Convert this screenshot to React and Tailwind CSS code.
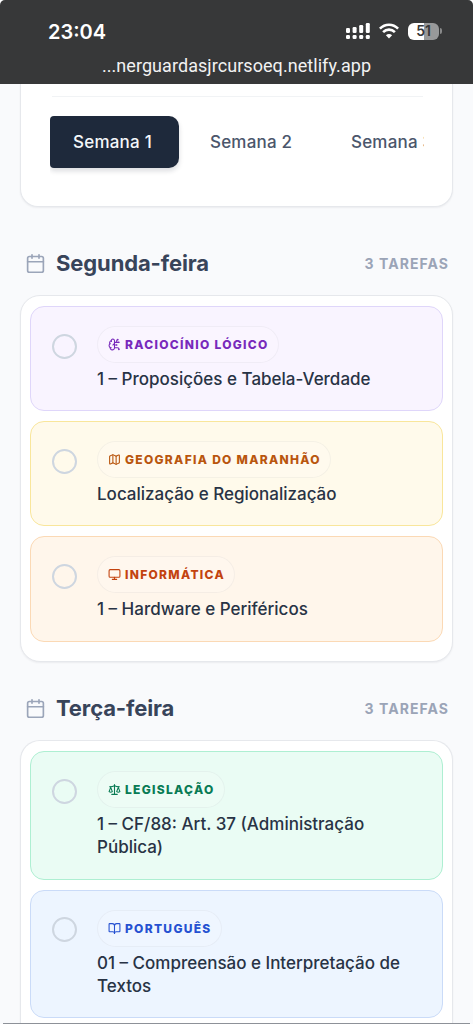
import React from 'react';
import { Calendar, BrainCircuit, Map as MapIcon, Monitor, Scale, BookOpen } from 'lucide-react';

function StatusBar() {
  return (
    <header className="h-[84px] shrink-0 bg-[#373839] rounded-t-[5px] text-white flex flex-col">
      <div className="flex items-center justify-between h-[26px] mt-[18px] pl-[48px] pr-[31px]">
        <span className="text-[20px] leading-[26px] pt-px font-semibold">23:04</span>
        <div className="flex items-center">
          <svg width="24" height="18" viewBox="0 0 24 18" fill="white">
            <rect x="0" y="6" width="4" height="5" rx="1.2" />
            <rect x="6.6" y="5" width="4" height="6" rx="1.2" />
            <rect x="13.2" y="3" width="4" height="8" rx="1.2" />
            <rect x="19.8" y="1" width="4" height="10" rx="1.2" />
            <rect x="0" y="13" width="4" height="4" rx="1.2" />
            <rect x="6.6" y="13" width="4" height="4" rx="1.2" />
            <rect x="13.2" y="13" width="4" height="4" rx="1.2" />
            <rect x="19.8" y="13" width="4" height="4" rx="1.2" />
          </svg>
          <svg className="ml-[9px]" width="20" height="16" viewBox="0 0 20 16" fill="none" stroke="white" strokeWidth="2.6">
            <path d="M0.9 5.6C6 .4 14 .4 19.1 5.6" />
            <path d="M4.1 9.2C7.5 5.8 12.5 5.8 15.9 9.2" />
            <path d="M10 15.5L6.9 12.2C8.6 10.5 11.4 10.5 13.1 12.2Z" fill="white" stroke="none" />
          </svg>
          <div className="ml-[9px] flex items-center">
            <div className="w-[31px] h-[17px] rounded-[6px] bg-linear-to-r from-white from-51% to-[#98999a] to-51% flex items-center justify-center text-[14px] leading-none font-semibold text-[#373839]">51</div>
            <div className="w-[2px] h-[6px] ml-px rounded-r-full bg-[#88898a]" />
          </div>
        </div>
      </div>
      <div className="mt-[9px] text-center text-[18px] leading-[26px] text-[#f2f2f2]">
        <span className="font-[Roboto] tracking-[0.06px]">...nerguardasjrcursoeq.netlify.app</span>
      </div>
    </header>
  );
}

function WeekCard() {
  return (
    <section className="h-[123px] shrink-0 mx-[20px] bg-white border border-t-0 border-[#e6e8ec] rounded-b-[18px] shadow-[0_1px_2px_rgba(15,23,42,0.06)] px-[29px]">
      <div className="h-[13px] ml-[2px] mr-0 border-b border-[#f1f3f5]" />
      <div className="flex mt-[19px] overflow-hidden h-[60px] w-[374px] text-[17px] leading-[52px] font-medium text-[#4b566b] tracking-[0.2px]">
        <div className="w-[129px] h-[52px] shrink-0 text-center rounded-l-[4px] rounded-r-[10px] bg-[#1e293b] text-[#f4f7fa] shadow-[0_3px_5px_rgba(15,23,42,0.15)] pr-[4px]">Semana 1</div>
        <div className="w-[141px] shrink-0 pl-[31px]">Semana 2</div>
        <div className="w-[130px] shrink-0 pl-[31px]">Semana 3</div>
      </div>
    </section>
  );
}

function DayHeader({ name }) {
  return (
    <div className="h-[30px] shrink-0 flex items-center pl-[25px] pr-[24px]">
      <Calendar size={21} strokeWidth={1.9} className="text-[#9ba5b9]" />
      <h2 className="ml-[10px] text-[22px] leading-[30px] font-bold tracking-[-0.12px] text-[#38445a]">{name}</h2>
      <span className="ml-auto text-[14px] font-bold tracking-[1.05px] text-[#9ba4b7]">3 TAREFAS</span>
    </div>
  );
}

function Task({ box, badge, icon: Icon, subject, children }) {
  return (
    <article className={`shrink-0 flex rounded-[14px] border pl-[21px] pt-[19px] ${box}`}>
      <div className="size-[25px] mt-[7.6px] shrink-0 rounded-full border-2 border-[#ced6e0]" />
      <div className="ml-[20px] flex flex-col items-start">
        <div className={`h-[37px] flex items-center rounded-full border border-[#0f172a0b] bg-white/15 pl-[10px] ${badge}`}>
          <Icon size={13} strokeWidth={2} className="shrink-0" />
          <span className="ml-[4px] pt-px whitespace-nowrap font-extrabold text-[12px] leading-none tracking-[1.3px]">{subject}</span>
        </div>
        <p className="mt-[5px] text-[17px] leading-[23px] font-medium text-[#283345] whitespace-nowrap">{children}</p>
      </div>
    </article>
  );
}

const panel = 'shrink-0 mx-[20px] bg-white border border-[#e6e8ec] shadow-[0_1px_2px_rgba(15,23,42,0.06)] px-[9px] pt-[10px] flex flex-col gap-[10px]';

export default function App() {
  return (
    <div className="w-[473px] h-[1024px] overflow-hidden bg-white font-[Inter,sans-serif]">
      <div className="h-[1024px] flex flex-col bg-[#f9fafc] rounded-t-[5px]">
        <StatusBar />
        <WeekCard />
        <div className="h-[41px] shrink-0" />
        <DayHeader name="Segunda-feira" />
        <section className={`${panel} mt-[17px] h-[367px] rounded-[20px]`}>
          <Task box="h-[105.2px] bg-[#f9f4ff] border-[#dfd6fa]" badge="w-[182px] text-[#7829bb]" icon={BrainCircuit} subject="RACIOCÍNIO LÓGICO">
            1 – Proposições e Tabela-Verdade
          </Task>
          <Task box="h-[105.2px] bg-[#fffaeb] border-[#f9e69b]" badge="w-[234px] text-[#b9560e]" icon={MapIcon} subject="GEOGRAFIA DO MARANHÃO">
            Localização e Regionalização
          </Task>
          <Task box="h-[105.2px] bg-[#fff6eb] border-[#fbd9b5]" badge="w-[138px] text-[#c3430f]" icon={Monitor} subject="INFORMÁTICA">
            1 – Hardware e Periféricos
          </Task>
        </section>
        <div className="h-[31px] shrink-0" />
        <DayHeader name="Terça-feira" />
        <section className={`${panel} mt-[17px] h-[300px] rounded-t-[20px] border-b-0`}>
          <Task box="h-[128.5px] bg-[#eafcf4] border-[#aeefd2]" badge="w-[128px] text-[#087b54]" icon={Scale} subject="LEGISLAÇÃO">
            1 – CF/88: Art. 37 (Administração<br />Pública)
          </Task>
          <Task box="h-[128.5px] bg-[#edf5ff] border-[#cadbf8]" badge="w-[125px] text-[#2551d1]" icon={BookOpen} subject="PORTUGUÊS">
            01 – Compreensão e Interpretação de<br />Textos
          </Task>
        </section>
      </div>
      <div className="relative -top-px h-px mx-[3px] bg-[#8d9198]" />
    </div>
  );
}
